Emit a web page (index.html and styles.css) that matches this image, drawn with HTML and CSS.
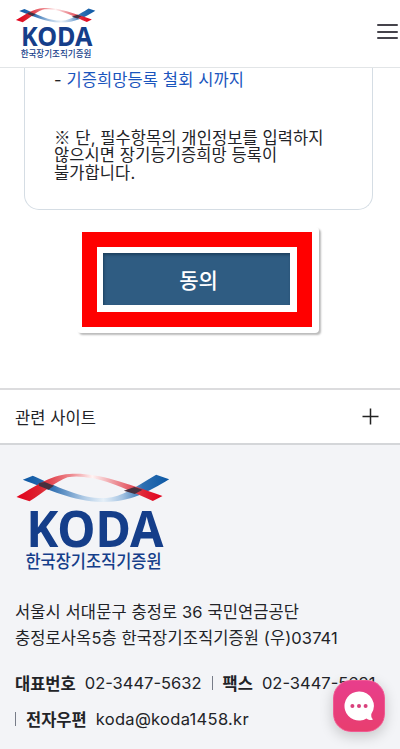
FILE: index.html
```html
<!DOCTYPE html>
<html lang="ko">
<head>
  <meta charset="UTF-8" />
  <meta name="viewport" content="width=device-width, initial-scale=1" />
  <title>한국장기조직기증원</title>
  <link rel="stylesheet" href="styles.css">
</head>
<body>

  <!-- Logo, shared by header and footer -->
  <svg class="defs" width="0" height="0" aria-hidden="true">
    <defs>
      <linearGradient id="red-band" gradientUnits="userSpaceOnUse" x1="49" y1="0" x2="487" y2="0">
        <stop offset="0" stop-color="#e3001b" />
        <stop offset="0.16" stop-color="#dc2430" />
        <stop offset="0.38" stop-color="#ee8c92" />
        <stop offset="0.52" stop-color="#fff3f3" />
        <stop offset="0.66" stop-color="#ee9ca2" />
        <stop offset="0.86" stop-color="#df2838" />
        <stop offset="1" stop-color="#e3001b" />
      </linearGradient>
      <linearGradient id="blue-band" gradientUnits="userSpaceOnUse" x1="68" y1="0" x2="507" y2="0">
        <stop offset="0" stop-color="#0b57a4" />
        <stop offset="0.2" stop-color="#3271b2" />
        <stop offset="0.42" stop-color="#b0cbe6" />
        <stop offset="0.55" stop-color="#e6f0f8" />
        <stop offset="0.68" stop-color="#a4c3e2" />
        <stop offset="0.82" stop-color="#2d6fb2" />
        <stop offset="1" stop-color="#0b57a4" />
      </linearGradient>
      <symbol id="logo" viewBox="45 36 470 300">
        <path fill="url(#blue-band)" d="M68 59 L98 47 C135 64 165 78 205 93 C250 110 285 116 318 114 C365 110 405 82 468 44 L507 58 C440 98 390 127 305 126 C215 123 150 89 68 59 Z" />
        <path fill="url(#red-band)" d="M49 111 C105 81 145 46 208 42 C290 37 365 66 487 108 L458 123 C390 94 335 66 280 55 C245 49 225 47 202 52 C165 66 130 98 88 124 Z" />
        <path fill="#47303f" d="M116 69 L134 66 L161 77 L145 89 L116 77 Z" />
        <path fill="#47303f" d="M371 92 L403 81 L427 89 L404 102 Z" />
        <text class="logo-name" x="78" y="261" textLength="412" lengthAdjust="spacingAndGlyphs">KODA</text>
        <text class="logo-sub" x="76" y="323" textLength="408" lengthAdjust="spacingAndGlyphs">한국장기조직기증원</text>
      </symbol>
    </defs>
  </svg>

  <header class="header">
    <a class="header-logo" href="#"><svg width="82" height="52"><use href="#logo" /></svg></a>
    <button class="menu-btn" aria-label="메뉴">
      <span></span>
      <span></span>
      <span></span>
    </button>
  </header>

  <main>
    <section class="terms">
      <p class="period">- <span>기증희망등록 철회 시까지</span></p>
      <p class="notice"><span class="mark">※</span> 단, 필수항목의 개인정보를 입력하지<br>않으시면 장기등기증희망 등록이<br>불가합니다.</p>
    </section>

    <div class="agree-frame">
      <div class="agree-outline">
        <button class="agree-btn">동의</button>
      </div>
    </div>
  </main>

  <div class="related">
    <span>관련 사이트</span>
    <svg width="17" height="17" viewBox="0 0 17 17"><path d="M8.5 0.5v16M0.5 8.5h16" stroke="#222" stroke-width="1.5" /></svg>
  </div>

  <footer class="footer">
    <svg class="footer-logo" width="157" height="100"><use href="#logo" /></svg>
    <address class="address">
      <span class="addr-first">서울시 서대문구 충정로 36 국민연금공단</span><br>
      <span class="addr-second">충정로사옥5층 한국장기조직기증원 (우)03741</span>
    </address>
    <div class="contact">
      <b>대표번호</b><span class="tel">02-3447-5632</span><i></i><b>팩스</b><span class="tel">02-3447-5631</span>
    </div>
    <div class="contact">
      <i class="first"></i><b>전자우편</b><span class="mail">koda@koda1458.kr</span>
    </div>
  </footer>

  <button class="chat-btn" aria-label="채팅">
    <svg width="30" height="30" viewBox="0 0 30 30">
      <path fill="#fff" d="M15 0.5a14.5 14.5 0 1 0 7.5 26.9c1.6 1.2 3.5 1.8 5.5 1.6c0.8-0.1 1-0.7 0.5-1.2c-1-1.1-1.4-2.5-1.2-4.7A14.5 14.5 0 0 0 15 0.5Z" />
      <g fill="#d9407c">
        <circle cx="8.4" cy="15" r="2" />
        <circle cx="15" cy="15" r="2" />
        <circle cx="21.6" cy="15" r="2" />
      </g>
    </svg>
  </button>

</body>
</html>
```
FILE: styles.css
```css
:root {
  --text-color: #222327;
  --navy: #153e8a;
  --font-main: Inter, "Noto Sans CJK KR", sans-serif;
}

* {
  box-sizing: border-box;
}

body {
  margin: 0;
  height: 749px;
  overflow: hidden;
  background: #fff;
  color: var(--text-color);
  font-family: var(--font-main);
  font-size: 16.5px;
}

p {
  margin: 0;
}

button {
  border: none;
  padding: 0;
  font-family: inherit;
}

svg {
  display: block;
}

.defs {
  position: absolute;
}

.logo-name {
  font-family: "Noto Sans", sans-serif;
  font-size: 152px;
  font-weight: 700;
  fill: var(--navy);
}

.logo-sub {
  font-family: "Noto Sans CJK KR", sans-serif;
  font-size: 53px;
  font-weight: 500;
  fill: var(--navy);
}

/* Header */
.header {
  display: flex;
  justify-content: space-between;
  align-items: flex-start;
  height: 68px;
  padding: 7px 2px 0 15px;
  border-bottom: 1px solid #e2e5e7;
}

.menu-btn {
  display: flex;
  flex-direction: column;
  gap: 4.5px;
  margin-top: 17px;
  background: none;
}

.menu-btn span {
  width: 21px;
  height: 2px;
  border-radius: 1px;
  background: #45434b;
}

/* Terms box */
.terms {
  height: 142px;
  margin: 0 27px 0 24px;
  padding: 0 0 0 29px;
  border: 1px solid #d5dde4;
  border-width: 0 1px 1px;
  border-radius: 0 0 15px 15px;
  line-height: 17.5px;
  letter-spacing: 0.1px;
}

.period {
  padding-top: 4px;
}

.period span {
  color: #1a55bd;
}

.notice {
  margin-top: 39px;
}

.mark {
  font-family: "Noto Sans CJK KR", sans-serif;
  line-height: 1;
}

/* Agree button */
.agree-frame {
  width: 242px;
  margin: 17px 0 0 77px;
  padding: 5px 7px 6px 5px;
  border-radius: 4px;
  box-shadow: 2px 2px 2px #bbb;
}

.agree-outline {
  padding: 6px 7px 7px 6px;
  border: 15px solid #f00;
}

.agree-btn {
  display: block;
  width: 100%;
  height: 52px;
  background: #2f5c82;
  box-shadow: inset 1px 2px 3px #1d405e;
  color: #fff;
  font-size: 21px;
  font-weight: 500;
  text-indent: 4px;
}

/* Related sites */
.related {
  display: flex;
  justify-content: space-between;
  align-items: center;
  height: 57px;
  margin-top: 55px;
  padding: 0 21px 0 15px;
  border-top: 2px solid #dcdcde;
  border-bottom: 2px solid #d4d6d9;
  letter-spacing: 0.1px;
}

/* Footer */
.footer {
  height: 304px;
  padding: 27px 0 0 15px;
  background: #f3f4f7;
}

.address {
  margin-top: 27px;
  font-style: normal;
  line-height: 26px;
  letter-spacing: 0.1px;
}

.contact {
  display: flex;
  align-items: center;
  height: 36px;
  white-space: nowrap;
}

.address + .contact {
  margin-top: 14px;
}

.contact b {
  font-weight: 700;
}

.contact span {
  margin-left: 9px;
}

.contact .mail {
  letter-spacing: 0.3px;
}

.contact i {
  width: 1px;
  height: 14px;
  margin: 0 10px;
  background: #777c88;
}

.contact i.first {
  margin-left: 0;
}

/* Chat */
.chat-btn {
  position: absolute;
  left: 333px;
  top: 680px;
  display: flex;
  justify-content: center;
  align-items: center;
  width: 52px;
  height: 52px;
  border: 1px solid #f05a92;
  border-radius: 18px;
  background: linear-gradient(#e83e8c, #e83e6f);
  box-shadow: 0 4px 14px rgba(0, 0, 0, 0.2);
}
```
